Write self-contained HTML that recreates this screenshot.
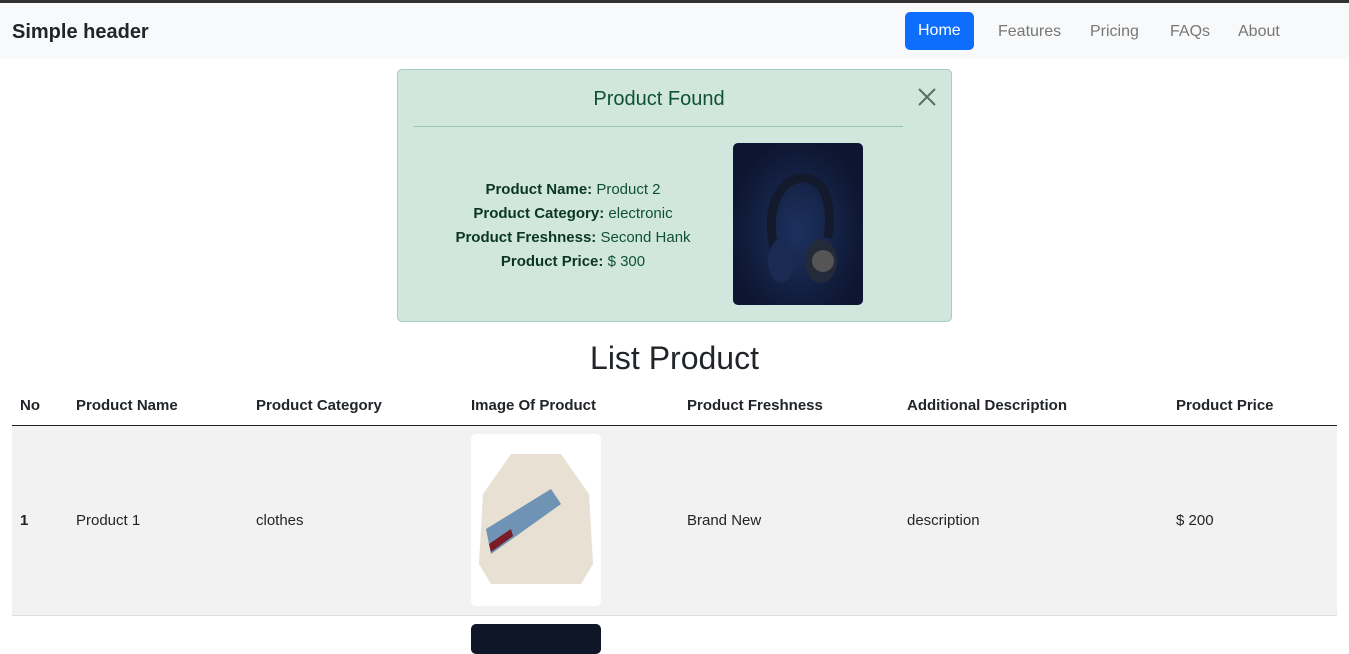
<!DOCTYPE html>
<html><head><meta charset="utf-8"><style>
*{box-sizing:border-box;margin:0;padding:0}
body{width:1349px;height:645px;overflow:hidden;font-family:"Liberation Sans",sans-serif;background:#fff;color:#212529;position:relative;border-top:3px solid #333}
.nav{height:56px;background:#f8f9fa;position:relative}
.brand{position:absolute;left:12px;top:18px;font-size:20px;font-weight:bold;color:#212529}
.links a{position:absolute;top:9px;font-size:16px;color:#777;padding-top:11px;text-decoration:none;height:38px;display:block}
.links a.act{background:#0d6efd;color:#fff;border-radius:5px;padding:10px 13px 0;left:905px;width:69px}
.alert{position:absolute;left:397px;top:66px;width:555px;height:253px;background:#d1e7dd;border:1px solid #a3cfbb;border-radius:5px;color:#0f5132}
.alert h4{position:absolute;left:0;width:522px;text-align:center;top:18px;font-size:20px;font-weight:normal}
.alert hr{position:absolute;left:16px;top:56px;width:489px;border:0;border-top:1px solid #96c5b0}
.close{position:absolute;left:520px;top:18px}
.info{position:absolute;left:55px;width:240px;top:108px;text-align:center;font-size:15px;line-height:24px}
.info b{color:#0a3622}
.himg{position:absolute;left:335px;top:73px;width:130px;height:162px;border-radius:5px;background:radial-gradient(ellipse at 50% 55%,#1d3260,#0d1530 75%)}
h2{position:absolute;top:337px;width:1349px;text-align:center;font-size:32px;font-weight:normal;color:#212529}
table{position:absolute;left:12px;top:384px;width:1325px;border-collapse:collapse;font-size:15px}
th{text-align:left;font-weight:bold;height:38px;border-bottom:1px solid #222;padding:0 8px}
td{padding:0 8px;height:190px;border-bottom:1px solid #ddd;background:#f2f2f2}
.jk{width:130px;height:172px;background:#fff;border-radius:5px}
.row2{position:absolute;left:471px;top:621px;width:130px;height:30px;background:#0e1628;border-radius:5px}
</style></head><body>
<div class="nav"><div class="brand">Simple header</div>
<div class="links"><a class="act">Home</a><a style="left:998px">Features</a><a style="left:1090px">Pricing</a><a style="left:1170px">FAQs</a><a style="left:1238px">About</a></div></div>
<div class="alert"><h4>Product Found</h4><hr>
<svg class="close" width="18" height="18" viewBox="0 0 18 18"><path d="M1 1L17 17M17 1L1 17" stroke="#5a6e65" stroke-width="2"/></svg>
<div class="info"><b>Product Name:</b> Product 2<br><b>Product Category:</b> electronic<br><b>Product Freshness:</b> Second Hank<br><b>Product Price:</b> $ 300</div>
<div class="himg"><svg width="130" height="162" viewBox="0 0 130 162"><path d="M42 110 C30 60 50 35 70 35 C92 35 100 60 95 95" fill="none" stroke="#131a2c" stroke-width="9"/><ellipse cx="48" cy="118" rx="13" ry="22" fill="#1a2a52"/><ellipse cx="88" cy="118" rx="16" ry="22" fill="#232a3a"/><circle cx="90" cy="118" r="11" fill="#555"/></svg></div>
</div>
<h2>List Product</h2>
<table><tr><th style="width:56px">No</th><th style="width:180px">Product Name</th><th style="width:215px">Product Category</th><th style="width:216px">Image Of Product</th><th style="width:220px">Product Freshness</th><th style="width:269px">Additional Description</th><th>Product Price</th></tr>
<tr><td><b>1</b></td><td>Product 1</td><td>clothes</td><td><div class="jk"><svg width="130" height="172" viewBox="0 0 130 172"><path d="M40 20 L90 20 L118 60 L122 130 L110 150 L20 150 L8 130 L12 60 Z" fill="#e8e0d2"/><path d="M15 95 L80 55 L90 70 L20 120 Z" fill="#6e93b4"/><path d="M18 110 L40 95 L42 102 L20 118 Z" fill="#7a1c25"/></svg></div></td><td>Brand New</td><td>description</td><td>$ 200</td></tr></table>
<div class="row2"></div>
</body></html>
